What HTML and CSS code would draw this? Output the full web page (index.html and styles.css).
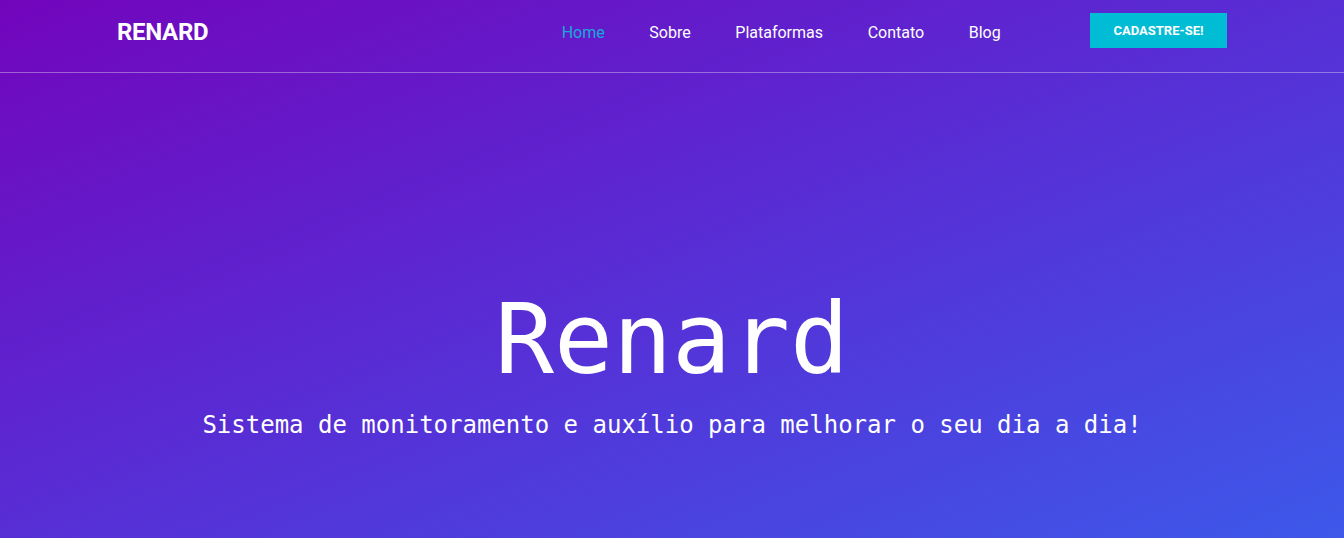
FILE: index.html
```html
<!DOCTYPE html>
<html lang="pt-BR">
<head>
<meta charset="utf-8">
<title>Renard</title>
<link rel="stylesheet" href="styles.css">
</head>
<body>
<div class="page">
  <header class="header">
    <div class="container header-inner">
      <a class="logo" href="#">RENARD</a>
      <nav class="nav">
        <a class="nav-link active" href="#">Home</a>
        <a class="nav-link" href="#">Sobre</a>
        <a class="nav-link" href="#">Plataformas</a>
        <a class="nav-link" href="#">Contato</a>
        <a class="nav-link" href="#">Blog</a>
      </nav>
      <a class="btn-signup" href="#">CADASTRE-SE!</a>
    </div>
  </header>
  <section class="hero">
    <h1 class="hero-title">Renard</h1>
    <p class="hero-subtitle">Sistema de monitoramento e auxílio para melhorar o seu dia a dia!</p>
  </section>
</div>
</body>
</html>
```

FILE: styles.css
```css
* { box-sizing: border-box; }
html, body { margin: 0; padding: 0; }
body {
  font-family: Roboto, "Liberation Sans", sans-serif;
  color: #fff;
}
.page {
  height: 538px;
  overflow: hidden;
  background: linear-gradient(to bottom right, #7205bc 0%, #5a2ad3 45%, #3d58ea 100%);
}
.header {
  height: 73px;
  border-bottom: 1px solid rgba(255, 255, 255, 0.35);
}
.container {
  width: 1110px;
  margin: 0 auto;
}
.header-inner {
  display: flex;
  align-items: flex-start;
  padding-top: 13px;
}
.logo {
  font-weight: 700;
  font-size: 24px;
  line-height: 24px;
  margin-top: 7px;
  color: #fff;
  text-decoration: none;
  letter-spacing: -0.3px;
}
.nav {
  display: flex;
  margin-left: auto;
  margin-top: 8px;
}
.nav-link {
  font-size: 16px;
  line-height: 24px;
  padding: 0 22.3px;
  color: #fff;
  text-decoration: none;
}
.nav-link.active { color: #18a9d8; }
.btn-signup {
  margin-left: 67px;
  width: 137px;
  height: 35px;
  display: flex;
  align-items: center;
  justify-content: center;
  background: #00bcd4;
  color: #fff;
  font-size: 13px;
  font-weight: 700;
  text-decoration: none;
}
.hero {
  text-align: center;
  padding-top: 217px;
}
.hero-title {
  margin: 0;
  font-family: "DejaVu Sans Mono", "Liberation Mono", monospace;
  font-weight: 400;
  font-size: 98px;
  line-height: 98px;
}
.hero-subtitle {
  margin: 19px 0 0;
  font-family: "DejaVu Sans Mono", "Liberation Mono", monospace;
  font-size: 24px;
  line-height: 36px;
}
```
